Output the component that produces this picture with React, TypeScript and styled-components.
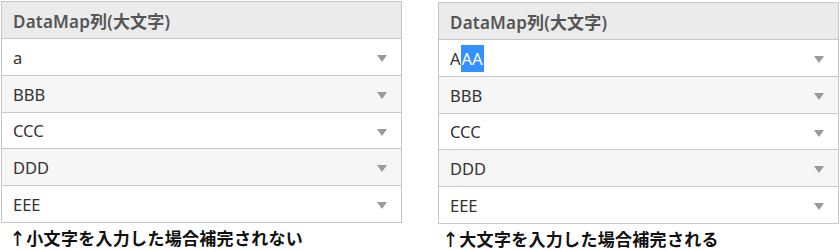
import React from 'react';
import styled, { createGlobalStyle } from 'styled-components';

const GlobalStyle = createGlobalStyle`
  html, body {
    margin: 0;
    padding: 0;
    background: #ffffff;
  }
  body {
    font-family: "Noto Sans", "Noto Sans CJK JP", sans-serif;
  }
  * {
    box-sizing: border-box;
  }
`;

interface Sample {
  value: string;
  selected?: string;
}

interface PanelProps {
  rows: Sample[];
  caption: string;
  captionIndent: number;
  top: number;
}

const Page = styled.div`
  display: flex;
  gap: 36px;
  padding-left: 1px;
  width: 840px;
  height: 250px;
`;

const Column = styled.div<{ $top: number }>`
  display: flex;
  flex-direction: column;
  width: 401px;
  padding-top: ${props => props.$top}px;
`;

const Grid = styled.div`
  border: 1px solid #c6c6c6;
  background: #ffffff;
`;

const HeaderCell = styled.div`
  height: 37px;
  display: flex;
  align-items: center;
  padding-left: 11px;
  background: #ebebeb;
  border-bottom: 1px solid #c6c6c6;
  color: #555555;
  font-size: 17px;
  font-weight: 600;
  letter-spacing: 0.2px;
`;

const Row = styled.div<{ $alt: boolean; $h: number }>`
  height: ${props => props.$h}px;
  display: flex;
  align-items: center;
  justify-content: space-between;
  padding: 0 14px 0 11px;
  background: ${props => (props.$alt ? '#f6f6f6' : '#ffffff')};
  border-bottom: 1px solid #c6c6c6;
  color: #333333;
  font-size: 16.5px;

  &:last-child {
    border-bottom: none;
  }
`;

const Selected = styled.span`
  background: #3390ff;
  color: #ffffff;
  padding: 2px 1px;
`;

const DropArrow = styled.span`
  width: 0;
  height: 0;
  border-left: 5.5px solid transparent;
  border-right: 5.5px solid transparent;
  border-top: 7px solid #9a9a9a;
  margin-top: 3px;
`;

const Caption = styled.div<{ $indent: number }>`
  margin-top: 3px;
  padding-left: ${props => props.$indent}px;
  font-family: "Noto Sans CJK JP", sans-serif;
  font-size: 17px;
  font-weight: 700;
  letter-spacing: 0.3px;
  color: #111111;
  line-height: 24px;
  white-space: nowrap;
`;

const rowHeights = [37, 37, 36, 37, 36];

const Panel: React.FC<PanelProps> = ({ rows, caption, captionIndent, top }) => (
  <Column $top={top}>
    <Grid>
      <HeaderCell>DataMap列(大文字)</HeaderCell>
      {rows.map((row, i) => (
        <Row key={i} $alt={i % 2 === 1} $h={rowHeights[i]}>
          <span>
            {row.value}
            {row.selected && <Selected>{row.selected}</Selected>}
          </span>
          <DropArrow />
        </Row>
      ))}
    </Grid>
    <Caption $indent={captionIndent}>{caption}</Caption>
  </Column>
);

const leftRows: Sample[] = [
  { value: 'a' },
  { value: 'BBB' },
  { value: 'CCC' },
  { value: 'DDD' },
  { value: 'EEE' },
];

const rightRows: Sample[] = [
  { value: 'A', selected: 'AA' },
  { value: 'BBB' },
  { value: 'CCC' },
  { value: 'DDD' },
  { value: 'EEE' },
];

export default function App() {
  return (
    <>
      <GlobalStyle />
      <Page>
        <Panel rows={leftRows} caption="↑小文字を入力した場合補完されない" captionIndent={8} top={1} />
        <Panel rows={rightRows} caption="↑大文字を入力した場合補完される" captionIndent={4} top={2} />
      </Page>
    </>
  );
}
